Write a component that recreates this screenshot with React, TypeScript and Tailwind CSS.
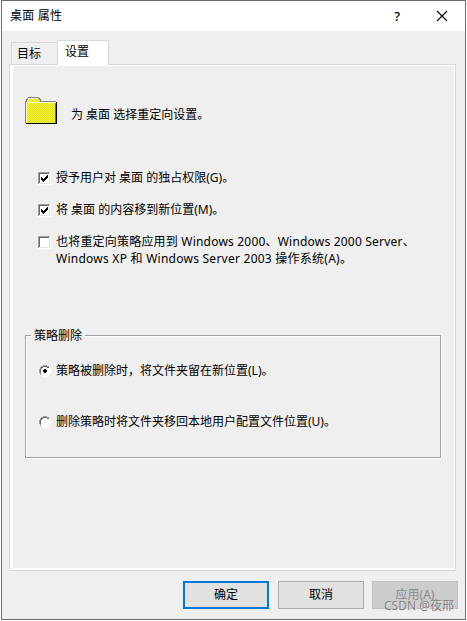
import { useState } from "react";
import type { ReactNode } from "react";
import clsx from "clsx";

function FolderIcon() {
  return (
    <svg width="34" height="28" viewBox="0 0 34 28" shapeRendering="crispEdges">
      <defs>
        <pattern id="dither" width="2" height="2" patternUnits="userSpaceOnUse">
          <rect width="2" height="2" fill="#ffff00" />
          <rect width="1" height="1" fill="#d8d83c" />
          <rect x="1" y="1" width="1" height="1" fill="#d8d83c" />
        </pattern>
      </defs>
      <path d="M1 26V4H2V2H3V1H14V2H15V3H16V4H31V26Z" fill="url(#dither)" />
      <path
        d="M0.5 26V4.5H1.5V2.5H2.5V1.5H3.5V0.5H13.5V1.5H14.5V2.5H15.5V4.5H31"
        fill="none"
        stroke="#808080"
      />
      <path d="M1.5 26V5.5H31M3.5 3.5V1.5H13" fill="none" stroke="#fff" />
      <path d="M1 26.5H32M31.5 5V27" fill="none" stroke="#000" strokeWidth="1" />
      <path d="M30.5 6V26" fill="none" stroke="#808000" />
    </svg>
  );
}

function CheckBox({ checked }: { checked: boolean }) {
  return (
    <svg
      width="13"
      height="13"
      viewBox="0 0 13 13"
      shapeRendering="crispEdges"
      className="shrink-0"
    >
      <rect width="13" height="13" fill="#fff" />
      <path d="M0.5 12V0.5H12" fill="none" stroke="#a0a0a0" />
      <path d="M1.5 11V1.5H11" fill="none" stroke="#696969" />
      <path d="M2 11.5H11.5V2" fill="none" stroke="#e3e3e3" />
      {checked && (
        <path
          d="M3 5h1v1h1v1h1v-1h1v-1h1v-1h1v-1h1v3h-1v1h-1v1h-1v1h-1v1h-1v-1h-1v-1h-1z"
          fill="#000"
        />
      )}
    </svg>
  );
}

function Radio({ checked }: { checked: boolean }) {
  return (
    <svg
      width="12"
      height="12"
      viewBox="0 0 12 12"
      shapeRendering="crispEdges"
      className="shrink-0"
    >
      <path d="M4 1h4v1h2v2h1v4h-1v2h-2v1h-4v-1h-2v-2h-1v-4h1v-2h2z" fill="#fff" />
      <path
        d="M4 0h4v1h2v1h-2v-1h-4v1h-2v2h-1v4h1v2h-1v-2h-1v-4h1v-2h1v-1h2z"
        fill="#a0a0a0"
      />
      <path d="M4 1h4v1h2v1h-2v-1h-4v1h-1v1h-1v4h-1v-4h1v-2h2z" fill="#696969" />
      <path d="M10 2h1v2h1v4h-1v2h-1v1h-2v1h-4v-1h4v-1h2v-2h1v-4h-1z" fill="#fff" />
      {checked && <path d="M5 4h2v1h1v2h-1v1h-2v-1h-1v-2h1z" fill="#000" />}
    </svg>
  );
}

function Option({
  type,
  checked,
  onClick,
  className,
  children,
}: {
  type: "checkbox" | "radio";
  checked: boolean;
  onClick: () => void;
  className?: string;
  children: ReactNode;
}) {
  return (
    <button
      type="button"
      role={type}
      aria-checked={checked}
      onClick={onClick}
      className={clsx("flex items-start text-left leading-[17px]", className)}
    >
      <span className="mr-[5px] pt-[3px]">
        {type === "checkbox" ? (
          <CheckBox checked={checked} />
        ) : (
          <Radio checked={checked} />
        )}
      </span>
      <span className="whitespace-nowrap">{children}</span>
    </button>
  );
}

function DialogButton({
  className,
  children,
  disabled,
}: {
  className: string;
  children: ReactNode;
  disabled?: boolean;
}) {
  return (
    <button
      type="button"
      disabled={disabled}
      className={clsx(
        "flex h-7 w-[86px] items-center justify-center pb-px",
        className,
      )}
    >
      {children}
    </button>
  );
}

export default function App() {
  const [exclusive, setExclusive] = useState(true);
  const [move, setMove] = useState(true);
  const [legacy, setLegacy] = useState(false);
  const [removal, setRemoval] = useState<"keep" | "restore">("keep");

  return (
    <div className="h-[621px] w-[467px] bg-white pl-px font-['Noto_Sans','Noto_Sans_CJK_SC',sans-serif] text-[12px] leading-4 text-black">
      <div className="flex h-[620px] w-[465px] flex-col border border-[#6e6e6e] bg-[#efefef]">
        {/* Title bar */}
        <div className="flex h-[30px] shrink-0 items-center bg-white pl-2">
          <span className="flex-1 tracking-[0.2px]">桌面 属性</span>
          <span className="mr-[36px] pb-px text-[13px] font-medium">?</span>
          <svg width="12" height="12" viewBox="0 0 12 12" className="mr-[17px]">
            <path d="M1 1L11 11M11 1L1 11" stroke="#000" strokeWidth="1.1" />
          </svg>
        </div>

        {/* Tabs */}
        <div className="flex h-[33px] shrink-0 items-end pl-[9px]">
          <div className="h-[22px] w-[46px] border border-r-0 border-b-0 border-[#d9d9d9] pt-[3px] pl-[5px]">
            目标
          </div>
          <div className="relative -mb-px h-[25px] w-[52px] border border-b-0 border-[#d9d9d9] bg-white pt-[3px] pl-[7px]">
            设置
          </div>
        </div>

        {/* Settings page */}
        <div className="ml-[7px] h-[507px] w-[447px] shrink-0 border border-[#d9d9d9]">
          <div className="flex h-full flex-col border-t border-r border-b-2 border-l-[3px] border-white pl-3">
            <div className="mt-[31px] flex h-7 gap-3">
              <FolderIcon />
              <span className="pt-[10px]">为 桌面 选择重定向设置。</span>
            </div>

            <Option
              type="checkbox"
              className="mt-[44px] ml-[13px]"
              checked={exclusive}
              onClick={() => setExclusive(!exclusive)}
            >
              授予用户对 桌面 的独占权限(G)。
            </Option>
            <Option
              type="checkbox"
              className="mt-[15px] ml-[13px]"
              checked={move}
              onClick={() => setMove(!move)}
            >
              将 桌面 的内容移到新位置(M)。
            </Option>
            <Option
              type="checkbox"
              className="mt-[15px] ml-[13px]"
              checked={legacy}
              onClick={() => setLegacy(!legacy)}
            >
              <span className="block tracking-[0.2px]">
                也将重定向策略应用到 Windows 2000、Windows 2000 Server、
              </span>
              <span className="block tracking-[0.25px]">
                Windows XP 和 Windows Server 2003 操作系统(A)。
              </span>
            </Option>

            <div className="mt-[68px] h-[123px] w-[416px] border border-[#a0a0a0] shadow-[1px_1px_0_#fff,inset_1px_1px_0_#fff]">
              <div className="relative -mt-[9px] ml-[5px] h-[17px] w-[54px] bg-[#efefef] pt-px pl-[3px]">
                策略删除
              </div>
              <Option
                type="radio"
                className="mt-[18px] ml-[13px]"
                checked={removal === "keep"}
                onClick={() => setRemoval("keep")}
              >
                策略被删除时，将文件夹留在新位置(L)。
              </Option>
              <Option
                type="radio"
                className="mt-[34px] ml-[13px]"
                checked={removal === "restore"}
                onClick={() => setRemoval("restore")}
              >
                删除策略时将文件夹移回本地用户配置文件位置(U)。
              </Option>
            </div>
          </div>
        </div>

        {/* Dialog buttons */}
        <div className="mt-[10px] flex pl-[181px]">
          <DialogButton className="border-2 border-[#0078d7] bg-[#e1e1e1]">
            确定
          </DialogButton>
          <DialogButton className="ml-[9px] border border-[#adadad] bg-[#e1e1e1]">
            取消
          </DialogButton>
          <div className="relative ml-2">
            <DialogButton
              disabled
              className="border border-[#bfbfbf] bg-[#cccccc] text-[#8b8b8b]"
            >
              应用(A)
            </DialogButton>
            <span className="absolute top-[17px] left-3 whitespace-nowrap text-[#858585] [text-shadow:1px_1px_0_#e4e4e4]">
              CSDN @夜邢
            </span>
          </div>
        </div>
      </div>
    </div>
  );
}
